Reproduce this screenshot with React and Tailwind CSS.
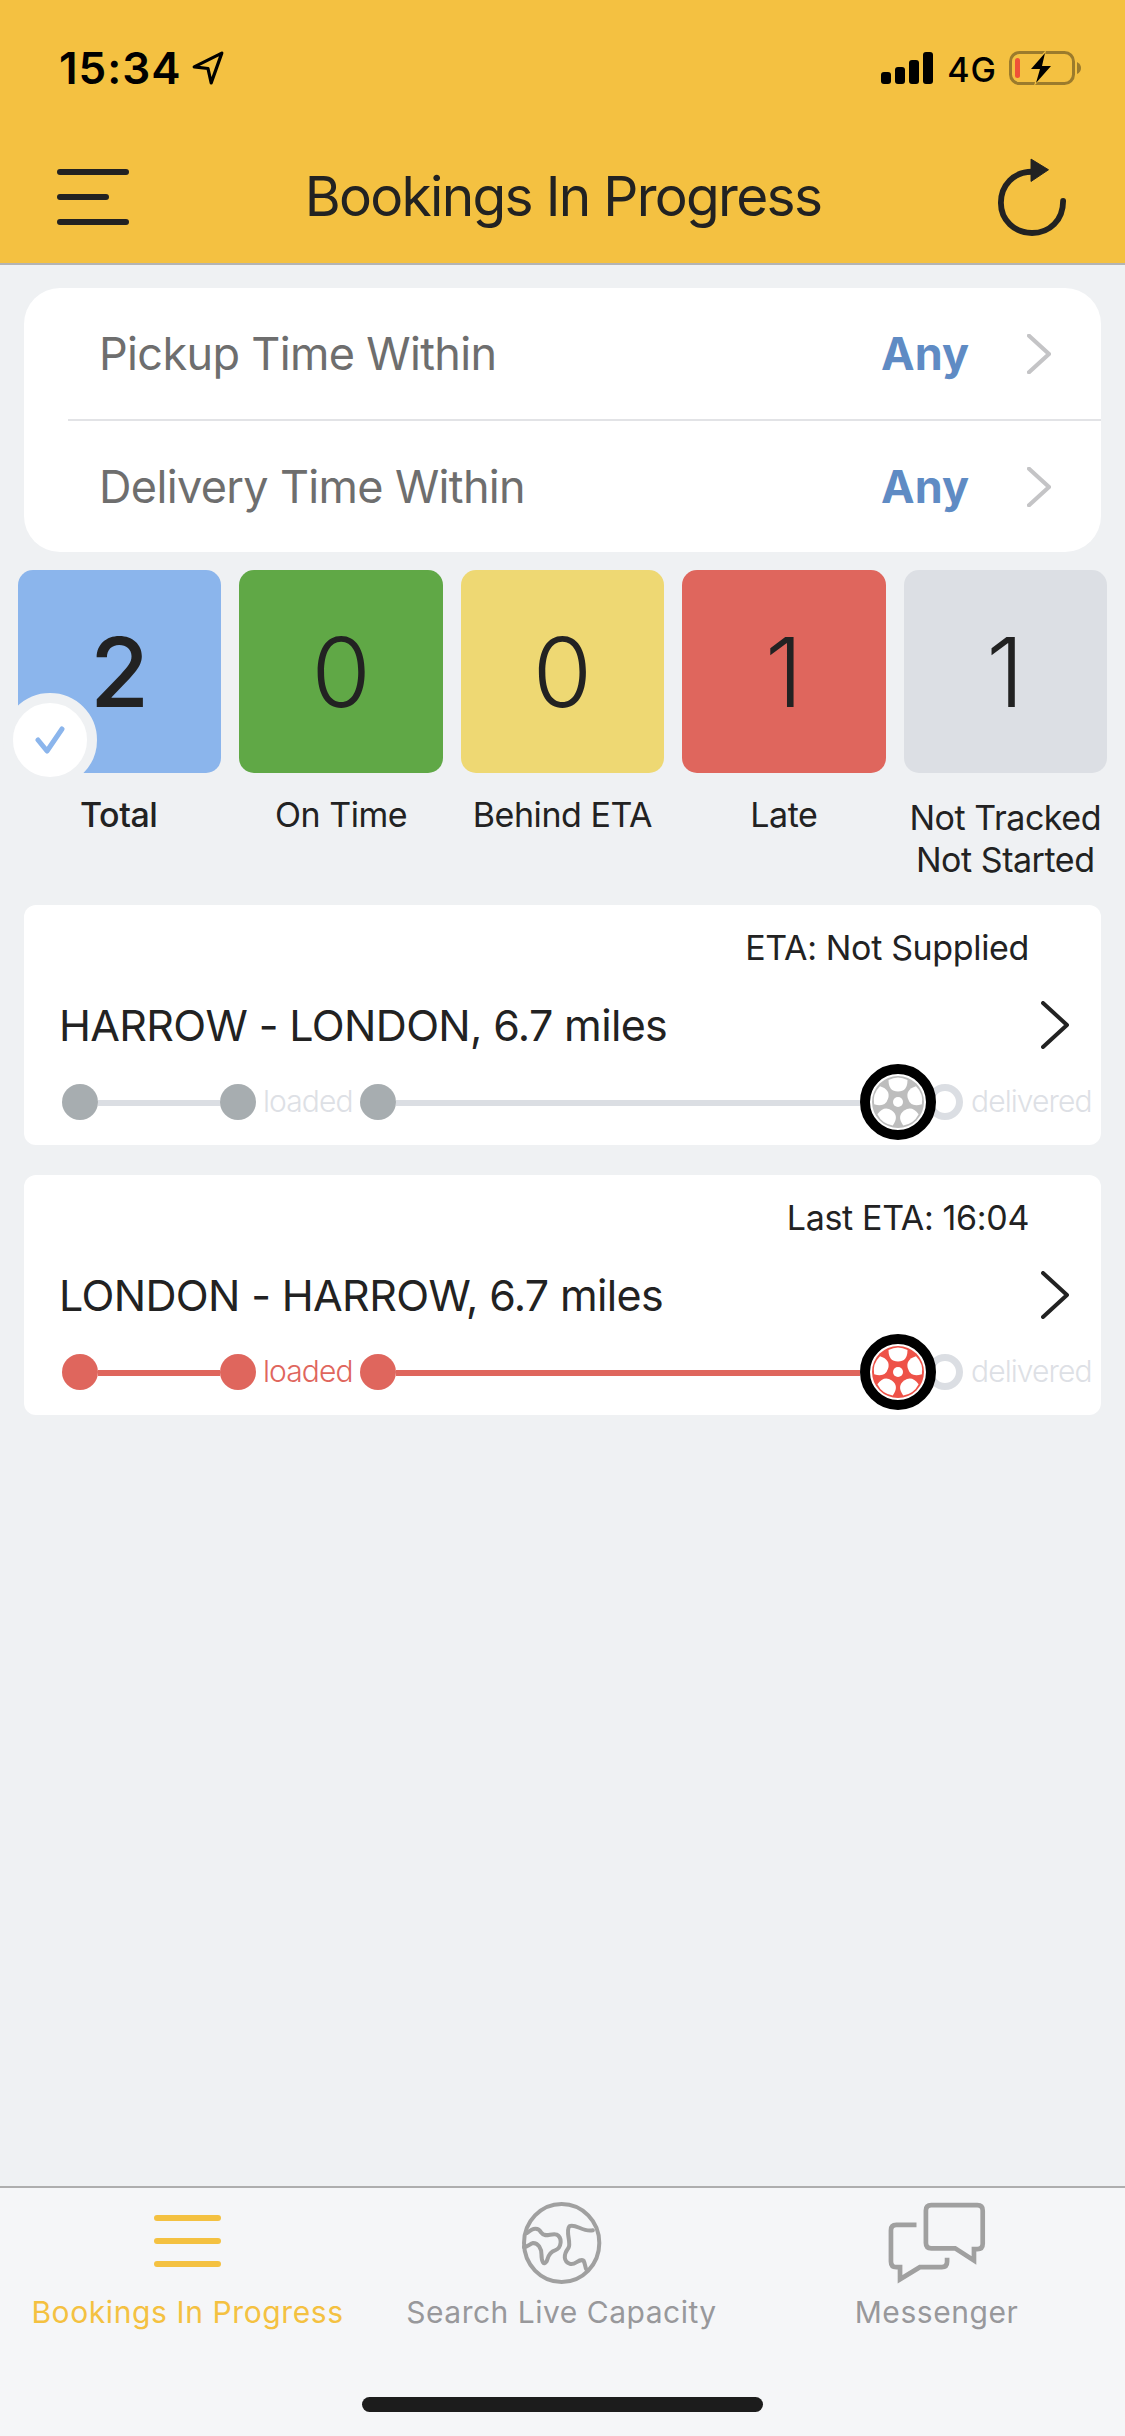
import React from 'react';

const stats = [
  { value: '2', label: ['Total'], bg: 'bg-[#8bb5ec]', selected: true },
  { value: '0', label: ['On Time'], bg: 'bg-[#60a846]' },
  { value: '0', label: ['Behind ETA'], bg: 'bg-[#eed873]' },
  { value: '1', label: ['Late'], bg: 'bg-[#df665d]' },
  { value: '1', label: ['Not Tracked', 'Not Started'], bg: 'bg-[#dcdfe4]' },
];

function Chevron({ className, width = 4 }) {
  return (
    <svg className={className} viewBox="0 0 28 48" fill="none" stroke="currentColor" strokeWidth={width} strokeLinecap="round" strokeLinejoin="round">
      <path d="M2 2 L26 24 L2 46" />
    </svg>
  );
}

function Wheel({ color }) {
  return (
    <svg className="relative z-10 w-[76px] h-[76px] shrink-0" viewBox="0 0 76 76">
      <circle cx="38" cy="38" r="33" fill="#fff" stroke="#000" strokeWidth="10" />
      <circle cx="38" cy="38" r="26" fill={color} />
      {[0, 72, 144, 216, 288].map(a => (
        <path key={a} d="M28.5 16 Q38 11 47.5 16 Q47.5 27.5 38 27.5 Q28.5 27.5 28.5 16Z" fill="#fff" transform={`rotate(${a} 38 38)`} />
      ))}
      <circle cx="38" cy="38" r="5" fill="#fff" />
    </svg>
  );
}

function BookingCard({ eta, title, late }) {
  const dot = late ? 'bg-[#df665d]' : 'bg-[#a7adb0]';
  const line = late ? 'bg-[#df665d]' : 'bg-[#dbdee3]';
  return (
    <div className="bg-white rounded-[12px] h-[240px] pl-[36px] relative">
      <div className="h-[84px] pt-[22px] pr-[72px] text-right text-[34px] leading-[41px] tracking-[-0.35px] text-[#222]">{eta}</div>
      <div className="flex items-center justify-between h-[72px] pr-[32px]">
        <span className="text-[43px] tracking-[-0.65px] -ml-[1px] text-[#222] whitespace-nowrap">{title}</span>
        <Chevron className="w-[28px] h-[48px] text-[#222]" />
      </div>
      <div className="flex items-center h-[76px] mt-[3px]">
        <div className={`w-[36px] h-[36px] rounded-full shrink-0 ml-[2px] ${dot}`} />
        <div className={`w-[122px] h-[6px] mt-[2px] shrink-0 ${line}`} />
        <div className={`w-[36px] h-[36px] rounded-full shrink-0 ${dot}`} />
        <span className={`w-[104px] shrink-0 pl-[7px] -mt-[2px] text-[30px] font-light whitespace-nowrap tracking-[-0.9px] ${late ? 'text-[#df665d]' : 'text-[#dde0e5]'}`}>loaded</span>
        <div className={`w-[36px] h-[36px] rounded-full shrink-0 ${dot}`} />
        <div className={`w-[464px] h-[6px] mt-[2px] shrink-0 ${line}`} />
        <Wheel color={late ? '#ee5248' : '#bdbdbd'} />
        <div className="w-[36px] h-[36px] rounded-full border-[7px] border-[#dbdee3] -ml-[9px] shrink-0" />
        <span className="pl-[8px] -mt-[2px] text-[30px] font-light whitespace-nowrap tracking-[-0.9px] text-[#dde0e5]">delivered</span>
      </div>
    </div>
  );
}

function FilterRow({ label }) {
  return (
    <div className="flex items-center justify-between h-[131px] pl-[75px] pr-[50px]">
      <span className="text-[45px] text-[#6e6e6e] tracking-[-0.65px]">{label}</span>
      <div className="flex items-center gap-[58px]">
        <span className="text-[45px] font-bold text-[#5f8bc4]">Any</span>
        <Chevron className="w-[24px] h-[40px] text-[#c4c4c6]" width={5} />
      </div>
    </div>
  );
}

export default function App() {
  return (
    <div className="w-[1125px] h-[2436px] flex flex-col bg-[#eff1f3] text-[#222]" style={{ fontFamily: 'Inter, sans-serif' }}>
      {/* header */}
      <div className="h-[265px] bg-[#f4c141] border-b-2 border-[#b4b4b4] shrink-0">
        <div className="flex items-center justify-between h-[36px] mt-0 pt-[50px] box-content pl-[59px] pr-[43px] text-black">
          <div className="flex items-center gap-[10px]">
            <span className="text-[44px] font-semibold leading-[36px] tracking-[1px]">15:34</span>
            <svg className="w-[32px] h-[34px]" viewBox="0 0 30 32" fill="none" stroke="#000" strokeWidth="3" strokeLinejoin="round">
              <path d="M28 2 L2 15 L15 16.5 L18 30 Z" />
            </svg>
          </div>
          <div className="flex items-center">
            <svg className="w-[52px] h-[32px]" viewBox="0 0 52 32" fill="#000">
              <rect x="0" y="20" width="10" height="12" rx="3" />
              <rect x="14" y="15" width="10" height="17" rx="3" />
              <rect x="28" y="8" width="10" height="24" rx="3" />
              <rect x="42" y="0" width="10" height="32" rx="3" />
            </svg>
            <span className="ml-[14px] mt-[4px] text-[34px] font-medium leading-[36px] tracking-[1px]">4G</span>
            <svg className="ml-[12px] w-[73px] h-[34px]" viewBox="0 0 73 34" fill="none">
              <rect x="1.5" y="1.5" width="63" height="31" rx="9" stroke="#9b7b2c" strokeWidth="3" />
              <rect x="6" y="7" width="5" height="20" rx="2.5" fill="#ee5238" />
              <path d="M68 11 Q72 13 72 17 Q72 21 68 23Z" fill="#9b7b2c" />
              <path d="M37 -1 L19 19 L29 19 L25 35 L45 14 L34 14 Z" fill="#f4c141" />
              <path d="M36 2 L22 18 L31 18 L27 32 L42 15 L33 15 Z" fill="#000" />
            </svg>
          </div>
        </div>
        <div className="flex items-center justify-between h-[105px] mt-[58px] pl-[57px] pr-[58px]">
          <div className="flex flex-col gap-[19px] w-[72px]">
            <div className="h-[6px] w-[72px] rounded-full bg-[#222]" />
            <div className="h-[6px] w-[52px] rounded-full bg-[#222]" />
            <div className="h-[6px] w-[72px] rounded-full bg-[#222]" />
          </div>
          <span className="text-[55px] tracking-[-1.7px] text-[#222]">Bookings In Progress</span>
          <svg className="w-[70px] h-[78px]" viewBox="0 0 72 80" fill="none">
            <path d="M36 14 C17 14 4 28 4 46 C4 64 18 77 36 77 C54 77 68 64 68 44" stroke="#222" strokeWidth="6" strokeLinecap="round" />
            <path d="M35 1 L53 12 L35 24 Z" fill="#222" stroke="#222" strokeWidth="1" strokeLinejoin="round" />
          </svg>
        </div>
      </div>

      {/* filters */}
      <div className="mx-[24px] mt-[23px] bg-white rounded-[36px] h-[264px] shrink-0">
        <FilterRow label="Pickup Time Within" />
        <div className="ml-[44px] h-[2px] bg-[#e2e3e6]" />
        <FilterRow label="Delivery Time Within" />
      </div>

      {/* status tiles */}
      <div className="flex gap-[18px] px-[18px] mt-[18px] h-[335px] shrink-0">
        {stats.map((s, i) => (
          <div key={i} className="w-[203.4px] flex flex-col items-center">
            <div className={`relative w-full h-[203px] rounded-[15px] flex items-center justify-center text-[96px] ${s.bg} ${s.selected ? 'font-medium' : 'font-light'}`}>
              {s.value}
              {s.selected && (
                <div className="absolute -left-[15px] top-[123px] w-[94px] h-[94px] rounded-full bg-white border-[10px] border-[#eff1f3] flex items-center justify-center">
                  <svg className="w-[30px] h-[28px]" viewBox="0 0 30 28" fill="none" stroke="#8bb5ec" strokeWidth="5" strokeLinejoin="round" strokeLinecap="round">
                    <path d="M3 14 L12 25 L27 3" />
                  </svg>
                </div>
              )}
            </div>
            <div className={`text-center text-[34px] leading-[42px] whitespace-nowrap tracking-[-0.45px] ${s.label.length > 1 ? 'mt-[24px]' : 'mt-[21px]'} ${s.selected ? 'font-medium -ml-[2px]' : ''}`}>
              {s.label.map(l => <div key={l}>{l}</div>)}
            </div>
          </div>
        ))}
      </div>

      {/* bookings */}
      <div className="flex flex-col gap-[30px] mx-[24px]">
        <BookingCard eta="ETA: Not Supplied" title="HARROW - LONDON, 6.7 miles" />
        <BookingCard eta="Last ETA: 16:04" title="LONDON - HARROW, 6.7 miles" late />
      </div>

      {/* tab bar */}
      <div className="mt-auto h-[250px] bg-[#f5f6f8] border-t-2 border-[#aeaeae] relative">
        <div className="grid grid-cols-3 pt-[14px]">
          <div className="flex flex-col items-center w-[375px]">
            <div className="h-[82px] flex flex-col justify-center gap-[17px] mt-[-2px]">
              <div className="h-[6px] w-[67px] rounded-full bg-[#f4c141]" />
              <div className="h-[6px] w-[67px] rounded-full bg-[#f4c141]" />
              <div className="h-[6px] w-[67px] rounded-full bg-[#f4c141]" />
            </div>
            <span className="mt-[12px] text-[30px] leading-[36px] tracking-[0.6px] text-[#f4c141] whitespace-nowrap">Bookings In Progress</span>
          </div>
          <div className="flex flex-col items-center">
            <svg className="w-[80px] h-[82px] -ml-[2px]" viewBox="118 38 236 244" fill="none" stroke="#a0a0a0" strokeWidth="12" strokeLinejoin="round" strokeLinecap="round">
              <ellipse cx="235" cy="160" rx="112" ry="116" />
              <path d="M132 130 C150 115 165 112 175 130 C185 145 205 130 220 135 C238 145 235 175 215 182 C195 188 195 205 190 215 C182 228 175 215 175 195 C175 175 165 160 150 160 C140 162 135 172 122 172" />
              <path d="M328 122 C300 130 275 100 258 110 C245 125 265 160 255 175 C240 195 240 215 260 222 C275 228 285 205 300 212 C305 222 305 232 308 238" />
            </svg>
            <span className="mt-[10px] -ml-[2px] text-[30px] leading-[36px] tracking-[0.5px] text-[#98989b] whitespace-nowrap">Search Live Capacity</span>
          </div>
          <div className="flex flex-col items-center">
            <svg className="w-[100px] h-[82px] -ml-[2px]" viewBox="1180 38 292 244" fill="none" stroke="#a0a0a0" strokeWidth="14">
              <path d="M1309 47 H1446 Q1462 47 1462 63 V162 Q1462 178 1446 178 H1436 V212 L1380 176 H1309 Q1293 176 1293 160 V63 Q1293 47 1309 47Z" />
              <path d="M1265 106 H1205 Q1189 106 1189 122 V215 Q1189 232 1205 232 H1216 V268 L1275 232 H1340 Q1356 232 1356 216 V204" />
            </svg>
            <span className="mt-[10px] text-[30px] leading-[36px] tracking-[0.55px] text-[#98989b] whitespace-nowrap -ml-[2px]">Messenger</span>
          </div>
        </div>
        <div className="absolute left-[362px] bottom-[24px] w-[401px] h-[15px] rounded-full bg-[#1c1c1c]" />
      </div>
    </div>
  );
}
